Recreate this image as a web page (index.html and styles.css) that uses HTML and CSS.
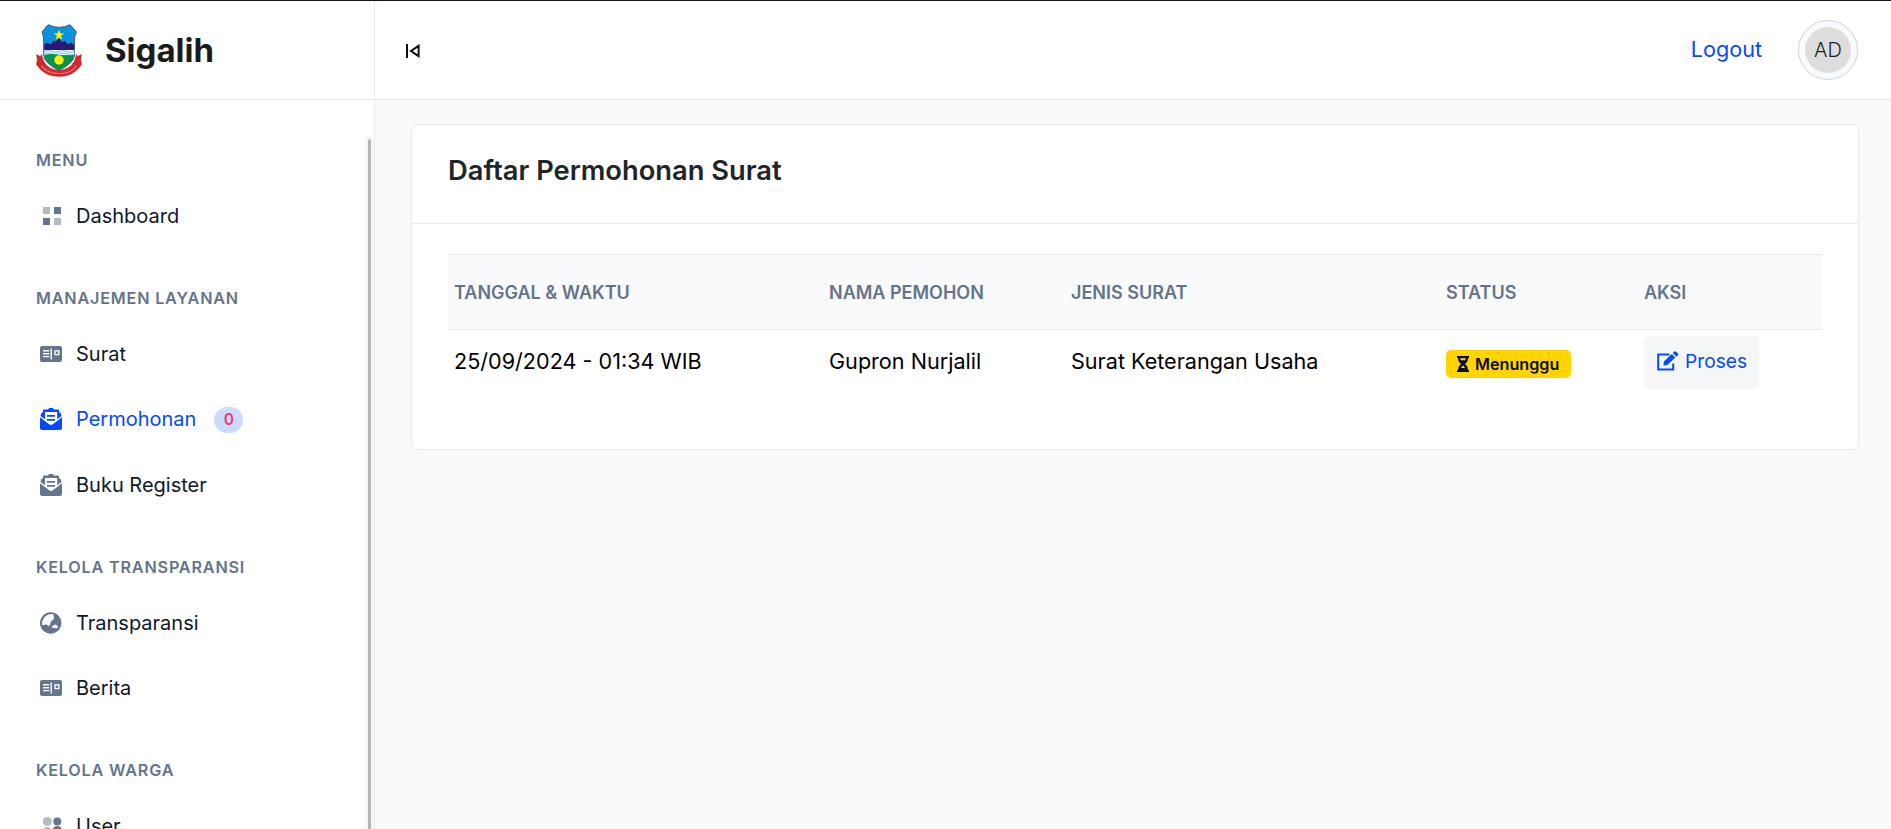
FILE: index.html
```html
<!DOCTYPE html>
<html lang="id">
<head>
<meta charset="utf-8">
<title>Sigalih</title>
<link rel="stylesheet" href="styles.css">
</head>
<body>
<svg class="defs" width="0" height="0">
  <symbol id="news" viewBox="0 0 22 16"><rect width="22" height="16" rx="2" fill="currentColor"/><path d="M3 4.700h6.200M3 7.700h6.200M3 10.600h6.200M11.200 2.500v11M15 4.800h3.800v3.800H15z" stroke="#fff" stroke-width="1.350" fill="none"/></symbol>
  <symbol id="mail" viewBox="0 0 22 22"><path fill="currentColor" fill-rule="evenodd" d="M3 2.200Q3 1.500 3.800 1.500H8L9.200.1h3.600L14 1.500h4.200q.8 0 .8.700v2.100l1.700.8.800 2.800-4.300 3.400V4H5v7.300L.5 7.900l.8-2.800L3 4.300zM0 9.300l8.800 6.800q2.200 1.600 4.400 0L22 9.300V20q0 2-2 2H2q-2 0-2-2zM7 7h8v1.700H7zM7 11h8v1.700H7z"/></symbol>
</svg>
<div class="app">
  <aside class="sidebar">
    <div class="brand">
      <svg class="crest" viewBox="0 0 46 53">
        <path d="M6 8 12 .7Q23 6 34 .7L40.500 8Q38 12 38.500 19v12Q38 39 23 46.500 8 39 7.700 31V19Q8 12 6 8z" fill="#0b92dc" stroke="#4c5966"/>
        <path d="M8.200 20.500l3-2 3 2 4-4 1.500 1L23 14.500l3.500 4 2-2 3.500 4 3-2 3 2.500v5.500H8.200z" fill="#2b1873"/>
        <path d="M8.200 26h30v5h-30z" fill="#e9f7ff"/>
        <path d="M8.200 27.500q4-2 7.500 0t7.500 0 7.500 0 7.500 0M8.200 30q4-2 7.500 0t7.500 0 7.500 0 7.500 0" stroke="#56b7e6" stroke-width=".8" fill="none"/>
        <path d="M8.200 31q7-2 15 0t15 0Q37.500 38.500 23 46 8.500 38.500 8.200 31z" fill="#079447"/>
        <path d="m23 5.500 1.300 3.800 4 .1-3.200 2.400 1.100 3.900-3.200-2.200-3.200 2.200 1.100-3.900-3.200-2.400 4-.1z" fill="#fff200"/>
        <circle cx="23" cy="36" r="4.700" fill="#fff200"/>
        <path d="M.5 30.500l4 2 1-2.300 2 6.800Q12 45.500 23 46.500q11-1 15.500-9.500l2-6.800 1 2.300 4-2-.8 5.500 1 4.200Q38 52.400 23 52.400T.3 40.200l1-4.200z" fill="#d9262c" stroke="#7a2529" stroke-width=".4"/>
        <path d="M5.500 41.500Q11 49.200 23 49.500t17.500-8" stroke="#fff" stroke-opacity=".6" stroke-width="1.200" stroke-dasharray="1.300 .7" fill="none"/>
      </svg>
      <span class="brand-name">Sigalih</span>
    </div>
    <nav class="menu">
      <h2 class="group">Menu</h2>
      <a class="item"><svg class="icon" viewBox="0 0 22 22"><path d="M3 2h7v7H3zM14 13h7v7h-7z" fill="#b2bac6"/><path d="M14 2h7v7h-7zM3 13h7v7H3z" fill="#65758f"/></svg><span>Dashboard</span></a>
      <h2 class="group">Manajemen Layanan</h2>
      <a class="item"><svg class="icon news"><use href="#news"/></svg><span>Surat</span></a>
      <a class="item active"><svg class="icon"><use href="#mail"/></svg><span>Permohonan</span><span class="count">0</span></a>
      <a class="item"><svg class="icon"><use href="#mail"/></svg><span>Buku Register</span></a>
      <h2 class="group">Kelola Transparansi</h2>
      <a class="item"><svg class="icon" viewBox="0 0 22 22"><circle cx="10.700" cy="11" r="10.700" fill="currentColor"/><path fill="#fff" d="M13.200 2.200 11.500 2Q3.500 2.800 2 10.800l.2 2.200h2l2-.8 2.400 2 1.300-1.200 1-3.700 2.200-1.200 1-2.500zM13 13.600l2.500-1 1.700.8 1 2.100-2.500.8-4.200-.7z"/></svg><span>Transparansi</span></a>
      <a class="item"><svg class="icon news"><use href="#news"/></svg><span>Berita</span></a>
      <h2 class="group">Kelola Warga</h2>
      <a class="item"><svg class="icon" viewBox="0 0 22 22"><g fill="#b2bac6"><circle cx="7.300" cy="6.500" r="4.500"/><path d="M3 16q0-4 4.300-4t4.300 4v5H3z"/></g><g fill="#65758f"><circle cx="17.300" cy="6.500" r="4"/><path d="M13 15q0-4 4.300-4t4.300 4v6H13z"/></g></svg><span>User</span></a>
    </nav>
    <div class="scroll"></div>
  </aside>
  <div class="page">
    <header class="topbar">
      <svg class="collapse" viewBox="0 0 14 14"><path d="M1 0v14M12.600 1.800v10.400L5 7z" fill="none" stroke="#0b1018" stroke-width="2"/></svg>
      <div class="account"><a class="logout">Logout</a><div class="avatar"><span>AD</span></div></div>
    </header>
    <main class="content">
      <section class="card">
        <h1 class="card-title">Daftar Permohonan Surat</h1>
        <div class="card-body">
          <table class="table">
            <colgroup><col class="c-date"><col class="c-name"><col class="c-type"><col class="c-status"><col></colgroup>
            <thead><tr><th>Tanggal &amp; Waktu</th><th>Nama Pemohon</th><th>Jenis Surat</th><th>Status</th><th>Aksi</th></tr></thead>
            <tbody><tr>
              <td>25/09/2024 - 01:34 WIB</td><td>Gupron Nurjalil</td><td>Surat Keterangan Usaha</td>
              <td><span class="badge"><svg viewBox="0 0 12 16"><path d="M0 0h12v2h-1q0 4-3.200 6Q11 10 11 14h1v2H0v-2h1q0-4 3.200-6Q1 6 1 2H0zM3.200 2.200q0 1.200.5 2.100h4.600q.5-.9.500-2.100zM4 12h4Q7.200 10.200 6 9.600 4.800 10.200 4 12z" fill="currentColor" fill-rule="evenodd"/></svg>Menunggu</span></td>
              <td><a class="button"><svg viewBox="0 0 22 20"><path d="M12.500 3.500H1.200v15h15v-6" fill="none" stroke="currentColor" stroke-width="2"/><path d="m6.300 14.600.6-4L14.700 3l3.500 3.500-7.800 7.600zM15.800 2 17 .8q1-1 2 0L20.800 2.500q1 1 0 2L19.400 5.700z" fill="currentColor"/></svg>Proses</a></td>
            </tr></tbody>
          </table>
        </div>
      </section>
    </main>
  </div>
</div>
</body>
</html>
```
FILE: styles.css
```css
* { box-sizing: border-box; }
body { margin: 0; height: 829px; overflow: hidden; font-family: Inter, sans-serif; background: #f9fafc; color: #000; }
.defs { display: block; position: absolute; }
.app { display: flex; height: 829px; border-top: 1px solid #16141c; }
.sidebar { position: relative; flex: none; width: 375px; background: #fff; border-right: 1px solid #e6e9f0; overflow: hidden; }
.brand { display: flex; align-items: center; height: 99px; padding-left: 36px; border-bottom: 1px solid #e6e9f0; gap: 23px; }
.crest { width: 46px; height: 53px; }
.brand-name { font-size: 33px; font-weight: 700; color: #1b1b1b; line-height: 40px; }
.menu { padding-top: 11px; }
.group { margin: 0; height: 72.300px; padding: 39px 0 0 36px; font-size: 16.200px; line-height: 20px; font-weight: 600; letter-spacing: .81px; text-transform: uppercase; color: #64748b; }
.item { display: flex; align-items: center; height: 65.500px; padding-left: 40px; font-size: 20px; color: #0f172a; }
.icon { width: 22px; height: 22px; margin-right: 14px; color: #65758f; }
.icon.news { height: 16px; }
.active, .active .icon { color: #0349fd; }
.count { width: 29px; height: 26px; margin: 2px 0 0 18px; border-radius: 13px; background: #ccdaff; color: #ed3d68; font-size: 15.500px; font-weight: 600; line-height: 25px; text-align: center; }
.scroll { position: absolute; right: 0; top: 135px; width: 9px; height: 720px; border-radius: 5px; background: #f6f6f6; }
.scroll::before { content: ""; display: block; width: 3px; height: 100%; margin: 3px 0 0 3px; border-radius: 2px; background: #b4b7b7; }
.page { flex: 1; }
.topbar { display: flex; align-items: center; justify-content: space-between; height: 99px; padding: 0 33px 0 31px; background: #fff; border-bottom: 1px solid #e6e9f0; }
.collapse { width: 14px; height: 14px; margin-top: 2px; }
.account { display: flex; align-items: center; gap: 36px; }
.logout { margin-bottom: 2px; font-size: 21.600px; color: #0349fd; }
.avatar { width: 60px; height: 60px; padding: 6px; border: 1px solid #cbd5e1; border-radius: 50%; background: #f9fafc; }
.avatar span { display: block; height: 46px; border-radius: 50%; background: #ddd; color: #222; font-size: 20px; font-weight: 300; line-height: 46px; text-align: center; }
.content { padding: 24px 32px 0 36px; }
.card { height: 326px; background: #fff; border: 1px solid #e6e9f0; border-radius: 6px; }
.card-title { margin: 0; height: 99px; padding: 29px 36px 0; font-size: 27.300px; line-height: 34px; font-weight: 600; color: #212529; border-bottom: 1px solid #e6e9f0; }
.card-body { padding: 30px 36px 0; }
.table { width: 100%; table-layout: fixed; border-collapse: separate; border-spacing: 0; }
.c-date, .c-type { width: 375px; }
.c-name { width: 242px; }
.c-status { width: 198px; }
.table th { height: 76px; padding: 1px 6px 0; text-align: left; font-size: 18px; font-weight: 600; text-transform: uppercase; color: #64748b; background: #f9fafc; border: solid #e6e9f0; border-width: 1px 0; }
.table td { height: 65px; padding: 0 6px 3px; font-size: 21.600px; }
.badge { display: flex; align-items: center; width: 125px; height: 28px; margin-top: 5px; padding-left: 11px; gap: 6px; border-radius: 5px; background: #ffd500; color: #0c0b38; font-size: 16.200px; font-weight: 600; }
.badge svg { width: 12px; height: 16px; }
.button { display: flex; align-items: flex-start; width: 115px; height: 53px; margin-top: 3px; padding: 13px 0 0 13px; gap: 6px; border-radius: 5px; background: #f5f6f8; color: #0349fd; font-size: 19.200px; line-height: 24px; }
.button svg { width: 22px; height: 20px; margin-top: 2px; }
```
